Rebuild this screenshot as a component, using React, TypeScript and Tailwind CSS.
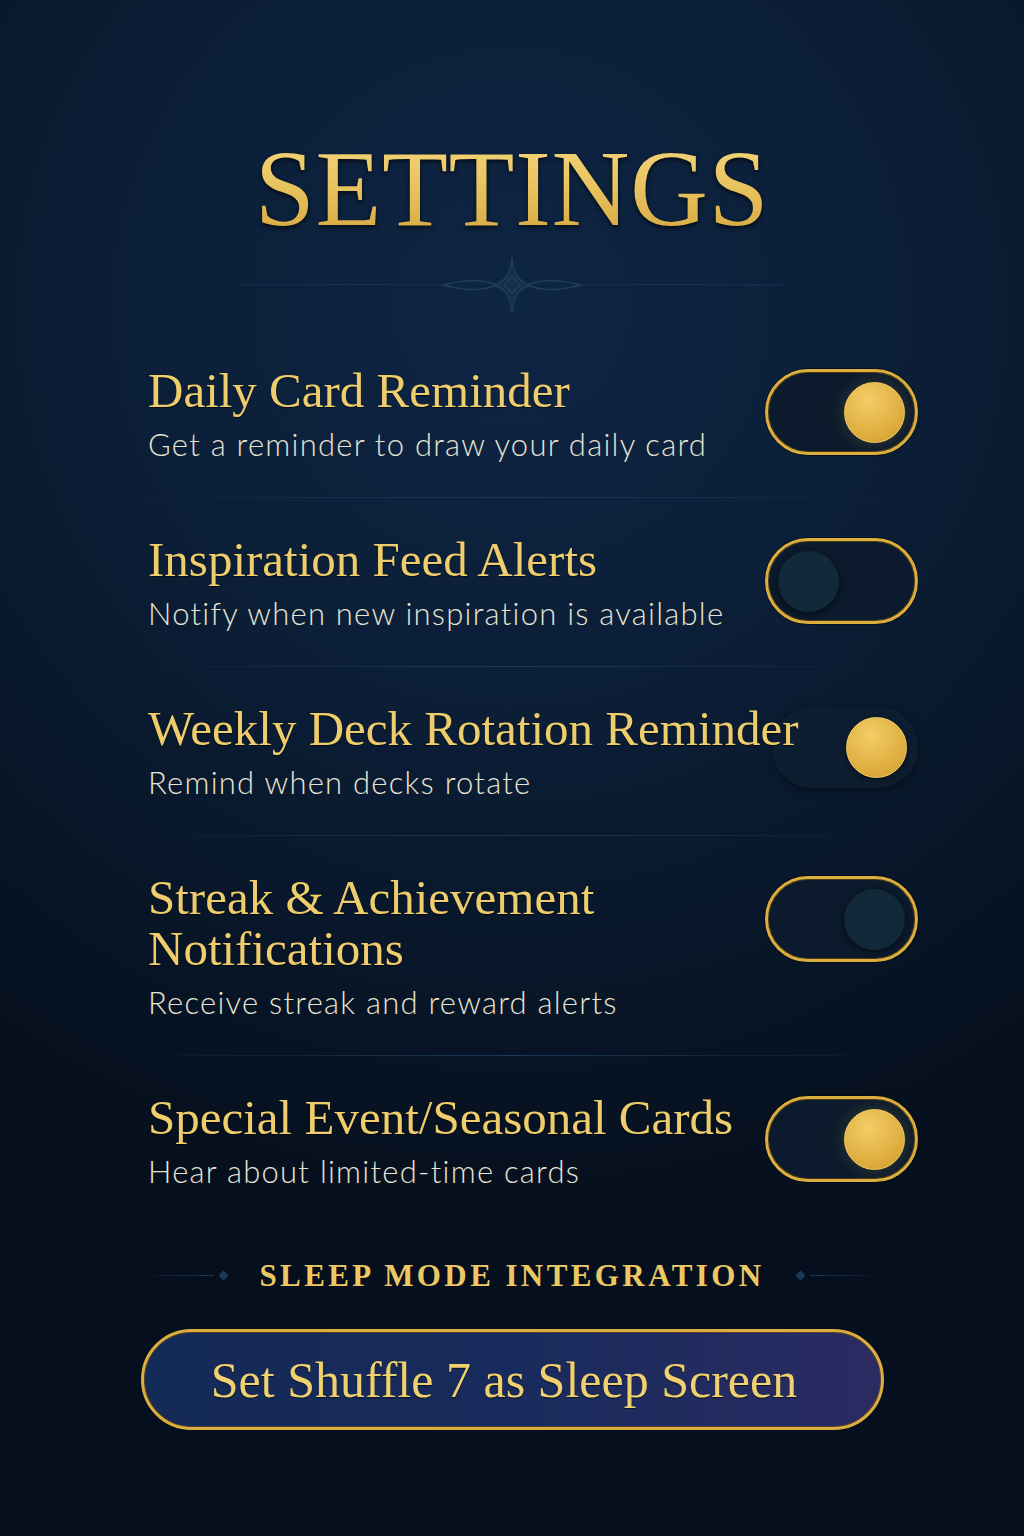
import React from "react";

const serif = "font-['Liberation_Serif','Times_New_Roman',serif]";
const sans = "font-['Lato','Open_Sans',sans-serif]";

type Mode = "on" | "off" | "offRight" | "plainOn";

function Toggle({ mode }: { mode: Mode }) {
  if (mode === "plainOn") {
    return (
      <div className="mt-[4px] flex h-[81px] w-[146px] items-center justify-end rounded-[40px] bg-[#0d1e31] pr-[11px] shadow-[0_2px_10px_rgba(0,0,0,0.45)]">
        <div className="h-[61px] w-[61px] rounded-full border border-[#f3cd5f] bg-[radial-gradient(circle_at_40%_30%,#f2ce66,#dcaa3c_70%,#c9952c)] shadow-[0_2px_6px_rgba(0,0,0,0.5)]" />
      </div>
    );
  }
  const right = mode === "on" || mode === "offRight";
  return (
    <div
      className={
        "mt-[4px] flex h-[86px] w-[153px] items-center rounded-full border-[3px] border-[#dcae3e] bg-[#0b1a2c] px-[10px] shadow-[inset_0_0_0_1px_rgba(120,80,10,0.6),0_0_0_1px_rgba(0,0,0,0.4)] " +
        (right ? "justify-end" : "justify-start")
      }
    >
      {mode === "on" && (
        <div className="h-[61px] w-[61px] rounded-full border border-[#f3cd5f] bg-[radial-gradient(circle_at_40%_30%,#f2ce66,#dcaa3c_70%,#c9952c)] shadow-[0_0_18px_rgba(240,200,100,0.18)]" />
      )}
      {(mode === "off" || mode === "offRight") && (
        <div className="h-[61px] w-[61px] rounded-full bg-[#12293a] shadow-[0_2px_6px_rgba(0,0,0,0.55)]" />
      )}
    </div>
  );
}

function Divider() {
  return <div className="h-px w-full bg-gradient-to-r from-transparent via-[#1b3a58] to-transparent" />;
}

function Row({
  title,
  sub,
  mode,
  last,
}: {
  title: React.ReactNode;
  sub: string;
  mode: Mode;
  last?: boolean;
}) {
  return (
    <div className="flex flex-col">
      <div className="flex items-start justify-between pl-[148px] pr-[106px] pt-[36px] pb-[36px]">
        <div className="flex min-w-0 flex-1 flex-col">
          <div className={serif + " relative z-10 text-[49px] leading-[51px] text-[#efcd6c] whitespace-nowrap [text-shadow:0_1px_1px_rgba(0,0,0,0.6)]"}>
            {title}
          </div>
          <div className={sans + " mt-[11px] text-[31px] font-light leading-[34px] tracking-[0.04em] text-[#e8e4d2] whitespace-nowrap"}>
            {sub}
          </div>
        </div>
        <div className="shrink-0">
          <Toggle mode={mode} />
        </div>
      </div>
      {!last && (
        <div className="px-[110px]">
          <Divider />
        </div>
      )}
    </div>
  );
}

function Ornament() {
  return (
    <svg width="540" height="60" viewBox="0 0 540 60" fill="none" className="block">
      <g stroke="#21415f" strokeWidth="1.5" opacity="0.9">
        <path d="M0 30 Q135 29 210 30" strokeWidth="1.2" opacity="0.6" />
        <path d="M330 30 Q405 29 540 30" strokeWidth="1.2" opacity="0.6" />
        <path d="M200 30 C225 24 240 24 255 30 C240 36 225 36 200 30 Z" />
        <path d="M340 30 C315 24 300 24 285 30 C300 36 315 36 340 30 Z" />
        <path d="M270 2 C271 18 276 26 288 30 C276 34 271 42 270 58 C269 42 264 34 252 30 C264 26 269 18 270 2 Z" fill="#17314f" />
        <path d="M262 30 L270 22 L278 30 L270 38 Z" />
      </g>
    </svg>
  );
}

export default function App() {
  return (
    <div className="relative h-[1536px] w-[1024px] overflow-hidden bg-[radial-gradient(ellipse_90%_60%_at_50%_20%,#0e2544_0%,#0b1e36_45%,#081628_75%,#060f1d_100%)]">
      <div className="flex flex-col items-center pt-[135px]">
        <h1
          className={
            serif +
            " text-[108px] leading-none tracking-[0.005em] bg-gradient-to-b from-[#f5d77c] via-[#e8c25e] to-[#d4a53c] bg-clip-text text-transparent [filter:drop-shadow(0_2px_2px_rgba(0,0,0,0.7))]"
          }
        >
          SETTINGS
        </h1>
        <div className="mt-[12px]">
          <Ornament />
        </div>
      </div>

      <div className="mt-[14px] flex flex-col">
        <Row title="Daily Card Reminder" sub="Get a reminder to draw your daily card" mode="on" />
        <Row title="Inspiration Feed Alerts" sub="Notify when new inspiration is available" mode="off" />
        <Row title="Weekly Deck Rotation Reminder" sub="Remind when decks rotate" mode="plainOn" />
        <Row
          title={
            <>
              Streak &amp; Achievement
              <br />
              Notifications
            </>
          }
          sub="Receive streak and reward alerts"
          mode="offRight"
        />
        <Row title="Special Event/Seasonal Cards" sub="Hear about limited-time cards" mode="on" last />
      </div>

      <div className="mt-[36px] flex items-center justify-center px-[140px]">
        <div className="h-px flex-1 bg-gradient-to-r from-transparent to-[#1c3a55]" />
        <div className="mx-[6px] h-[7px] w-[7px] rotate-45 bg-[#1c3a55]" />
        <div className={serif + " mx-[26px] text-[31px] font-bold leading-none tracking-[0.11em] text-[#ecc862]"}>
          SLEEP MODE INTEGRATION
        </div>
        <div className="mx-[6px] h-[7px] w-[7px] rotate-45 bg-[#1c3a55]" />
        <div className="h-px flex-1 bg-gradient-to-l from-transparent to-[#1c3a55]" />
      </div>

      <div className="mt-[38px] flex justify-center">
        <button className="flex h-[101px] w-[743px] items-center justify-center rounded-full border-[3px] border-[#dcae3e] bg-gradient-to-r from-[#142a57] via-[#182b5c] to-[#2a2b62] pr-[16px] shadow-[inset_0_0_0_1px_rgba(120,80,10,0.6)]">
          <span className={serif + " text-[50px] leading-none text-[#f0d170] [text-shadow:0_1px_1px_rgba(0,0,0,0.6)]"}>
            Set Shuffle 7 as Sleep Screen
          </span>
        </button>
      </div>
    </div>
  );
}
